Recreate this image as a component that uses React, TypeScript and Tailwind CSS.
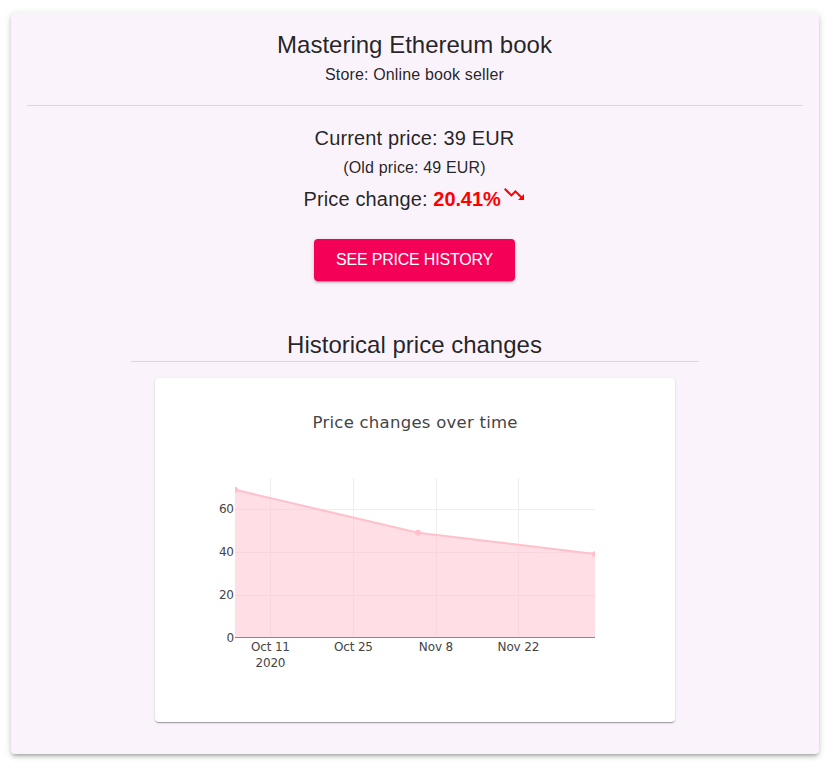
const xTicks = [
  { x: 115.5, label: "Oct 11", w: 39 },
  { x: 198.5, label: "Oct 25", w: 39 },
  { x: 281, label: "Nov 8", w: 34.5 },
  { x: 363.5, label: "Nov 22", w: 42 },
];

const yTicks = [
  { y: 131.5, label: "60" },
  { y: 174.5, label: "40" },
  { y: 217.5, label: "20" },
];

const points = [
  { x: 80, y: 112 },
  { x: 263, y: 155 },
  { x: 440, y: 176.5 },
];

function PriceChart() {
  return (
    <svg width="520" height="344" viewBox="0 0 520 344" className="block font-['DejaVu_Sans',Verdana,sans-serif]">
      <defs>
        <clipPath id="plot">
          <rect x="80" y="100" width="360" height="160" />
        </clipPath>
      </defs>
      <text x="157.5" y="50" fontSize="16.5" fill="#444" textLength="205">Price changes over time</text>
      <g stroke="#eee" strokeWidth="1">
        {xTicks.map((t) => (
          <line key={t.label} x1={Math.floor(t.x) + 0.5} x2={Math.floor(t.x) + 0.5} y1="100" y2="260" />
        ))}
        {yTicks.map((t) => (
          <line key={t.label} x1="80" x2="440" y1={t.y} y2={t.y} />
        ))}
      </g>
      <g clipPath="url(#plot)">
        <path d="M80 260V111.7L263 154.7L440 176V260Z" fill="#ffc0cb" fillOpacity="0.5" />
        <path d="M80 111.7L263 154.7L440 176" fill="none" stroke="#ffc0cb" strokeWidth="2" />
        {points.map((p) => (
          <circle key={p.x} cx={p.x} cy={p.y - 0.3} r="3" fill="#ffc0cb" />
        ))}
      </g>
      <line x1="80" x2="440" y1="259.5" y2="259.5" stroke="#99818a" />
      <g fontSize="12" fill="#444">
        {yTicks.map((t) => (
          <text key={t.label} x="64" y={t.y + 3.5} textLength="15">{t.label}</text>
        ))}
        <text x="71.5" y="264">0</text>
        {xTicks.map((t) => (
          <text key={t.label} x={t.x - t.w / 2} y="273" textLength={t.w}>{t.label}</text>
        ))}
        <text x="100.5" y="289" textLength="30">2020</text>
      </g>
    </svg>
  );
}

export default function App() {
  return (
    <div className="h-[769px] overflow-hidden bg-white pt-[13px] pl-[11px] font-['Liberation_Sans',Arial,sans-serif] text-black/87">
      <main className="flex h-[741px] w-[808px] flex-col items-center rounded bg-[#faf3fb] p-4 shadow-[0px_3px_3px_-2px_rgba(0,0,0,0.2),0px_3px_4px_0px_rgba(0,0,0,0.14),0px_1px_8px_0px_rgba(0,0,0,0.12)]">
        <h1 className="pr-px text-2xl leading-8">Mastering Ethereum book</h1>
        <p className="pr-px text-base leading-7 tracking-[0.00938em]">Store: Online book seller</p>
        <hr className="my-4 w-full border-t border-[#dcd5de]" />
        <p className="pr-px text-xl leading-8 tracking-[0.0075em]">Current price: 39 EUR</p>
        <p className="pr-px text-base leading-7 tracking-[0.00938em]">(Old price: 49 EUR)</p>
        <p className="flex h-[33px] pr-px text-xl leading-[34px] tracking-[0.0075em]">
          <span className="whitespace-pre">Price change: </span>
          <strong className="font-bold tracking-[-0.005em] text-[#f00]">20.41%</strong>
          <svg viewBox="0 0 24 24" className="ml-px h-6 w-6 fill-[#f00]">
            <path d="M16 18l2.29-2.29-4.88-4.88-4 4L2 7.41 3.41 6l6 6 4-4 6.3 6.29L22 12v6z" />
          </svg>
        </p>
        <button className="mt-6 mr-px h-[42px] w-[201px] rounded bg-[#f50057] text-base leading-[26px] tracking-[-0.012em] text-white shadow-[0px_3px_1px_-2px_rgba(0,0,0,0.2),0px_2px_2px_0px_rgba(0,0,0,0.14),0px_1px_5px_0px_rgba(0,0,0,0.12)]">
          SEE PRICE HISTORY
        </button>
        <h2 className="mt-12 pr-px text-2xl leading-8">Historical price changes</h2>
        <hr className="mb-4 w-[568px] border-t border-[#dcd5de]" />
        <section className="h-[344px] w-[520px] shrink-0 rounded bg-white shadow-[0px_2px_1px_-1px_rgba(0,0,0,0.2),0px_1px_1px_0px_rgba(0,0,0,0.14),0px_1px_3px_0px_rgba(0,0,0,0.12)]">
          <PriceChart />
        </section>
      </main>
    </div>
  );
}
